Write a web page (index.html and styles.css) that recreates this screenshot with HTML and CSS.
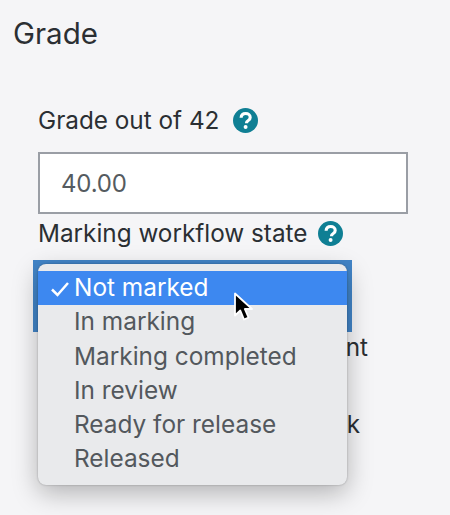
FILE: index.html
```html
<!DOCTYPE html>
<html lang="en">
<head>
    <meta charset="UTF-8">
    <title>Grade</title>
    <link rel="stylesheet" href="styles.css">
</head>
<body>
    <h2 class="title">Grade</h2>

    <div class="form">
        <!-- Grade -->
        <div class="label first-label">
            Grade out of 42
            <svg class="help" viewBox="0 0 24 24"><circle cx="12" cy="12" r="12" fill="#0f7f94"/><path d="M7.8 9.4C7.9 6.9 9.7 5.3 12.2 5.3c2.500 0 4.300 1.500 4.300 3.700 0 1.500-.8 2.400-2.100 3.200-1.100.7-1.400 1.100-1.400 2v.5" fill="none" stroke="#fff" stroke-width="3"/><circle cx="12.100" cy="18.300" r="1.900" fill="#fff"/></svg>
        </div>
        <div class="input">40.00</div>

        <!-- Workflow -->
        <div class="label">
            Marking workflow state
            <svg class="help" viewBox="0 0 24 24"><circle cx="12" cy="12" r="12" fill="#0f7f94"/><path d="M7.8 9.4C7.9 6.9 9.7 5.3 12.2 5.3c2.500 0 4.300 1.500 4.300 3.700 0 1.500-.8 2.400-2.100 3.200-1.100.7-1.400 1.100-1.400 2v.5" fill="none" stroke="#fff" stroke-width="3"/><circle cx="12.100" cy="18.300" r="1.900" fill="#fff"/></svg>
        </div>

        <div class="select-wrap">
            <div class="select-focus"></div>
            <div class="behind behind-one">Notify student</div>
            <div class="behind behind-two">Current grade in gradebook</div>

            <!-- Native style dropdown, lies over the rows behind it -->
            <div class="menu">
                <div class="menu-item selected">
                    <svg class="check" viewBox="0 0 18 16"><path d="M1 8.500 6.500 14 17 2" fill="none" stroke="#fff" stroke-width="2.500"/></svg>
                    Not marked
                </div>
                <div class="menu-item">In marking</div>
                <div class="menu-item">Marking completed</div>
                <div class="menu-item">In review</div>
                <div class="menu-item">Ready for release</div>
                <div class="menu-item">Released</div>
            </div>

            <svg class="cursor" viewBox="0 0 20 30"><path d="M2 1.500V23.500L7.300 18.500 11 27.500 15.500 25.500 11.800 17H19Z" fill="#000" stroke="#fff" stroke-width="1.800" stroke-linejoin="round"/></svg>
        </div>
    </div>
</body>
</html>
```

FILE: styles.css
```css
/* Global Styles */
body {
    font-family: 'Inter', sans-serif;
    margin: 0;
    padding: 0;
    background-color: #f5f5f7;
    color: #2b2f33;
    height: 515px;
    overflow: hidden;
}

.title {
    margin: 0;
    padding: 16px 0 0 13px;
    font-size: 29.500px;
    line-height: 34px;
    font-weight: 400;
}

/* Form */
.form {
    padding-left: 38px;
    width: 370px;
}

.label {
    display: flex;
    align-items: center;
    gap: 11px;
    font-size: 24.300px;
    line-height: 30px;
}

.first-label {
    margin-top: 55px;
}

.first-label .help {
    margin-left: 3px;
}

.help {
    width: 25px;
    height: 25px;
}

.input {
    box-sizing: border-box;
    height: 62px;
    margin-top: 17px;
    margin-bottom: 4px;
    padding-left: 21px;
    background: #fff;
    border: 2px solid #9a9ea5;
    font-size: 24px;
    letter-spacing: -0.2px;
    line-height: 60px;
    color: #555b60;
}

/* Select and its dropdown */
.select-wrap {
    position: relative;
    margin-top: 12px;
}

.select-focus {
    margin-left: -5px;
    width: 319px;
    height: 72px;
    background: #4285c8;
}

.behind {
    text-align: right;
    font-size: 24.300px;
    line-height: 30px;
    white-space: nowrap;
}

.behind-one {
    width: 330px;
}

.behind-two {
    width: 322px;
    margin-top: 47px;
}

.menu {
    position: absolute;
    top: 4px;
    left: 0;
    width: 309px;
    box-sizing: border-box;
    padding-top: 7px;
    padding-bottom: 8px;
    background: #e9eaec;
    border-radius: 8px;
    box-shadow: 0 8px 26px rgba(0, 0, 0, 0.28), 0 0 2px rgba(0, 0, 0, 0.3);
}

.menu-item {
    position: relative;
    height: 34.300px;
    line-height: 33px;
    padding-left: 36px;
    font-size: 24.400px;
    color: #53585d;
    white-space: nowrap;
}

.menu-item.selected {
    background: #3d88f0;
    color: #fff;
}

.check {
    position: absolute;
    left: 13px;
    top: 10px;
    width: 18px;
    height: 16px;
}

.cursor {
    position: absolute;
    left: 195px;
    top: 32px;
    width: 20px;
    height: 30px;
}
```
